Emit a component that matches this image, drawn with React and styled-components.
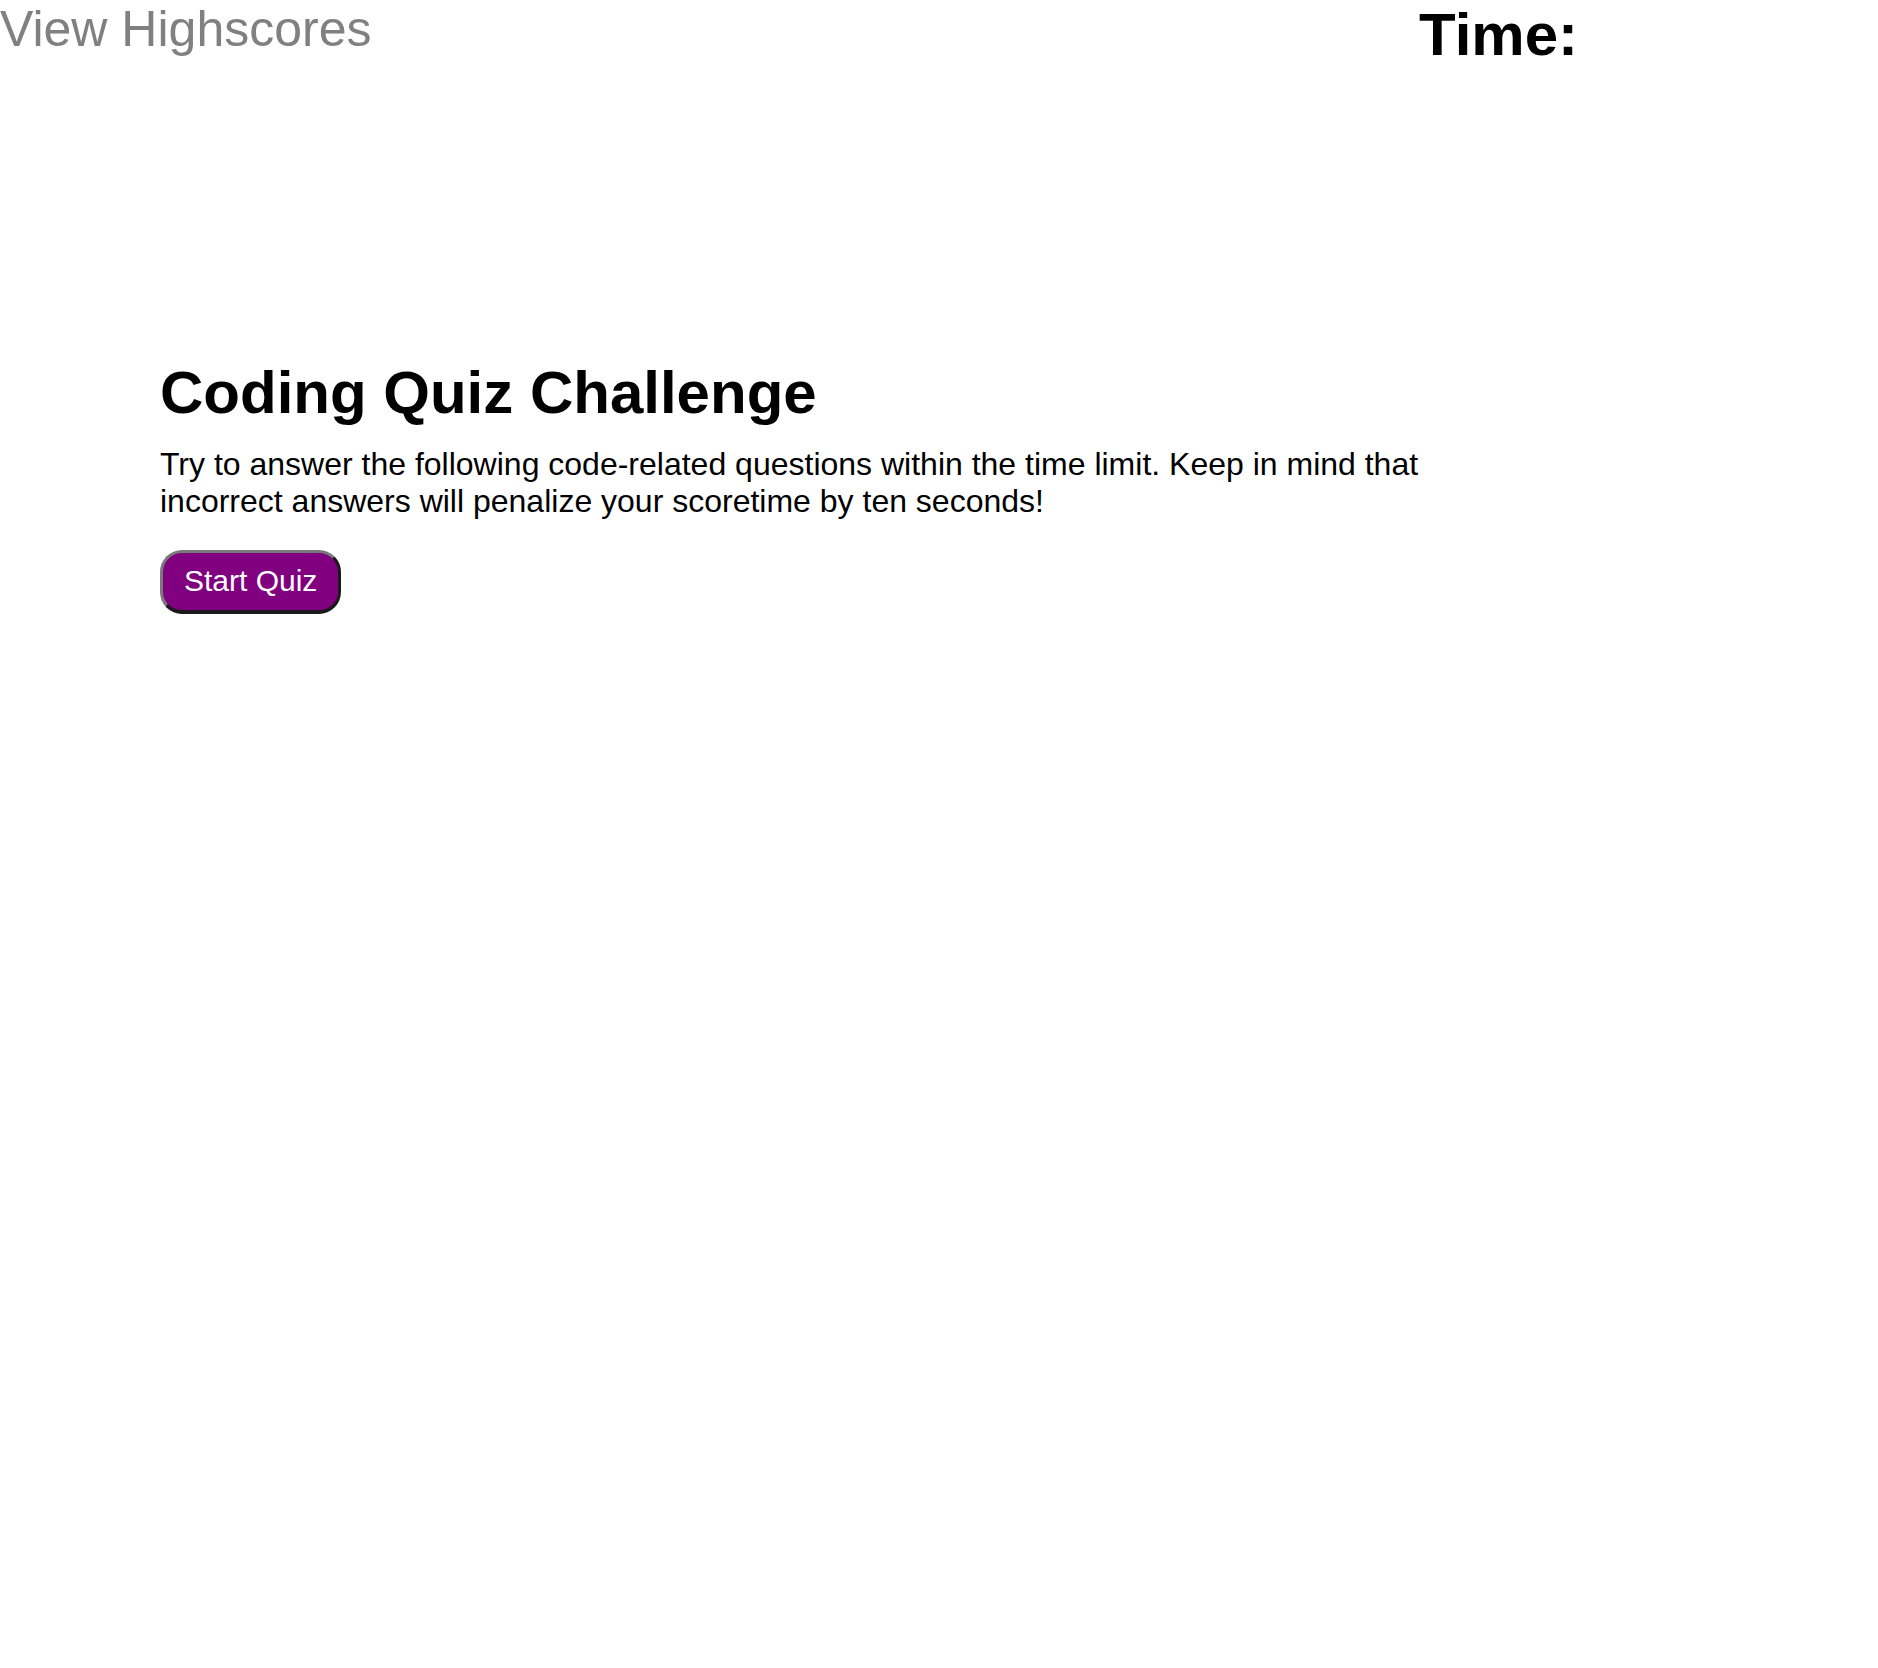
import React from 'react'
import styled, { createGlobalStyle } from 'styled-components'

const GlobalStyle = createGlobalStyle`
 body {
  margin: 0;
  background: #fff;
  font-family: 'Liberation Sans', Arial, Helvetica, sans-serif;
  color: #000;
 }
`

const Header = styled.header`
 display: flex;
 justify-content: space-between;
 align-items: flex-start;
 padding-right: 300px;
`

const ScoresLink = styled.a`
 font-size: 50px;
 color: #808080;
 text-decoration: none;
 cursor: pointer;
`

const Timer = styled.h2`
 margin: 0;
 font-size: 60px;
 font-weight: bold;
`

const Main = styled.main`
 margin-top: 289px;
 padding-left: 160px;
 max-width: 1300px;
`

const Title = styled.h1`
 margin: 0 0 19px;
 font-size: 60px;
 font-weight: bold;
`

const Intro = styled.p`
 margin: 0 0 30px;
 font-size: 32px;
`

const StartButton = styled.button`
 font-family: inherit;
 font-size: 30px;
 color: #fff;
 background: #800080;
 padding: 11px 21px 12px;
 border: 3px solid;
 border-color: #7a7a7a #1a1a1a #1a1a1a #7a7a7a;
 border-bottom-width: 4px;
 border-radius: 22px;
 cursor: pointer;
`

const App = () => {
 return (
  <>
   <GlobalStyle />
   <Header>
    <ScoresLink>View Highscores</ScoresLink>
    <Timer>Time:</Timer>
   </Header>
   <Main>
    <Title>Coding Quiz Challenge</Title>
    <Intro>
     Try to answer the following code-related questions within the time limit. Keep in mind that
     incorrect answers will penalize your scoretime by ten seconds!
    </Intro>
    <StartButton>Start Quiz</StartButton>
   </Main>
  </>
 )
}

export default App
